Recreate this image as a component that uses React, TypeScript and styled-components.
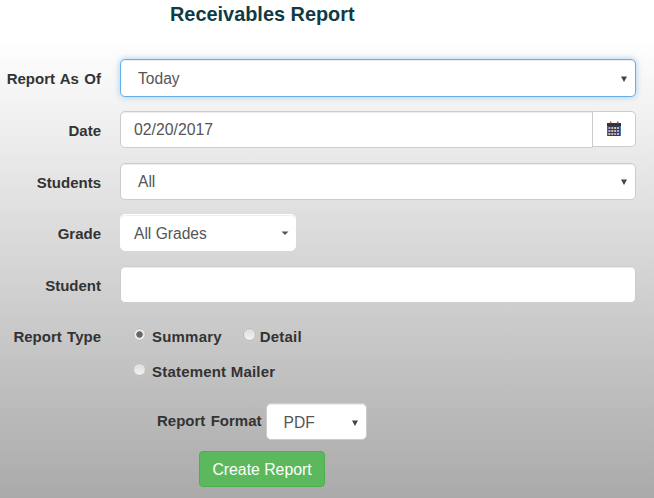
import React from "react";
import styled, { createGlobalStyle } from "styled-components";

const Global = createGlobalStyle`
  html, body { margin: 0; padding: 0; }
  body { font-family: "Liberation Sans", Arial, sans-serif; font-size: 15px; color: #333; }
`;

const Page = styled.div`
  width: 654px;
  height: 498px;
  overflow: hidden;
  background: linear-gradient(to bottom, #ffffff 0, #ffffff 38px, #aaaaaa 498px);
  display: flex;
  flex-direction: column;
`;

const Title = styled.h1`
  margin: 0;
  padding: 3px 0 0 170px;
  height: 59px;
  box-sizing: border-box;
  font-size: 19.9px;
  line-height: 23px;
  font-weight: 700;
  color: #0f3b45;
`;

const Form = styled.div`
  display: flex;
  flex-direction: column;
  gap: 14.4px;
  padding-right: 18px;
`;

const Label = styled.label<{ $shift?: number }>`
  font-size: 15px;
  word-spacing: 1.2px;
  font-weight: 700;
  text-align: right;
  color: #333;
  white-space: nowrap;
  padding-top: ${(p) => (p.$shift !== undefined ? p.$shift : 2)}px;
`;

const Row = styled.div<{ $top?: number }>`
  display: grid;
  grid-template-columns: 101px 1fr;
  column-gap: 19px;
  align-items: ${(p) => (p.$top ? "start" : "center")};
  margin-top: ${(p) => p.$top ?? 0}px;
`;

const Control = styled.div<{ $focus?: boolean; $w?: number; $plain?: boolean; $pl?: number; $h?: number; $pr?: number }>`
  box-sizing: border-box;
  height: ${(p) => p.$h ?? 37.2}px;
  width: ${(p) => (p.$w ? `${p.$w}px` : "100%")};
  padding: 2px ${(p) => p.$pr ?? 7}px 0 ${(p) => p.$pl ?? 13}px;
  display: flex;
  align-items: center;
  justify-content: space-between;
  background: #fff;
  border-radius: 5px;
  border: 1px solid ${(p) => (p.$focus ? "#66afe9" : p.$plain ? "#fff" : "#ccc")};
  box-shadow: ${(p) => (p.$focus ? "inset 0 1px 1px rgba(0,0,0,.075), 0 0 6px rgba(102,175,233,.6)" : "inset 0 1px 1px rgba(0,0,0,.075)")};
  color: #555;
  font-size: 15.6px;
`;

const InputGroup = styled.div`
  display: flex;
  height: 37.2px;
  align-items: flex-start;
`;

const DateInput = styled.div`
  flex: 1;
  height: 100%;
  box-sizing: border-box;
  display: flex;
  align-items: center;
  padding-left: 13px;
  background: #fff;
  border: 1px solid #ccc;
  border-radius: 5px 0 0 5px;
  color: #555;
  font-size: 15.8px;
  box-shadow: inset 0 1px 1px rgba(0,0,0,.075);
`;

const Addon = styled.div`
  width: 43px;
  height: 36px;
  box-sizing: border-box;
  display: flex;
  align-items: center;
  justify-content: center;
  background: #fff;
  border: 1px solid #ccc;
  border-left: 0;
  border-radius: 0 5px 5px 0;
`;

const Radios = styled.div`
  display: flex;
  flex-direction: column;
  gap: 18px;
  padding-left: 13px;
`;

const RadioLine = styled.div`
  display: flex;
  align-items: center;
  height: 17px;
`;

const Radio = styled.span<{ $on?: boolean; $mr?: number }>`
  width: 13px;
  height: 13px;
  box-sizing: border-box;
  border-radius: 50%;
  border: 1px solid #b8b8b8;
  background: ${(p) =>
    p.$on
      ? "radial-gradient(circle, #666 0 2.8px, #e6e6e6 3.6px)"
      : "linear-gradient(#dedede, #f2f2f2)"};
  box-shadow: 0 0 1px rgba(255,255,255,.7);
  margin-top: -4px;
  margin-right: ${(p) => p.$mr ?? 6}px;
`;

const RadioText = styled.span<{ $gap?: number }>`
  font-weight: 700;
  font-size: 15px;
  letter-spacing: 0.2px;
  color: #333;
  margin-right: ${(p) => p.$gap ?? 0}px;
`;

const FormatRow = styled.div`
  display: flex;
  align-items: center;
  gap: 4px;
  padding: 0 0 0 157px;
  margin-top: 23px;
  & > label {
    padding-bottom: 2px;
  }
`;

const ButtonRow = styled.div`
  padding: 11px 0 0 199px;
`;

const Button = styled.button`
  width: 126px;
  height: 36px;
  padding: 1px 0 0;
  font: 15.8px "Liberation Sans", Arial, sans-serif;
  color: #fff;
  background: #5cb85c;
  border: 1px solid #4cae4c;
  border-radius: 4px;
`;

const Chevron = () => (
  <svg width="8" height="8" viewBox="0 0 8 8">
    <path d="M1 1.5 H7 L4 7 Z" fill="#444" />
  </svg>
);

const SmallCaret = () => (
  <svg width="8" height="5" viewBox="0 0 8 5">
    <path d="M0.5 0.5 H7.5 L4 4 Z" fill="#555" />
  </svg>
);

const CalendarIcon = () => (
  <svg width="14" height="15" viewBox="0 0 14 15">
    <rect x="0" y="2" width="14" height="3" fill="#333" />
    <rect x="3" y="0.5" width="1.4" height="2" fill="#a8503c" />
    <rect x="10" y="0.5" width="1.4" height="2" fill="#a03c78" />
    <rect x="0" y="5" width="14" height="10" fill="#3a3a50" />
    <rect x="0" y="5" width="1" height="10" fill="#9a4a3a" />
    <rect x="13" y="5" width="1" height="10" fill="#3a7ab8" />
    {[0, 1, 2].map((r) =>
      [0, 1, 2, 3].map((c) => (
        <rect
          key={`${r}-${c}`}
          x={1.4 + c * 2.9}
          y={6 + r * 3}
          width="2"
          height="2"
          fill={["#d89ab8", "#9ac4e8", "#e0c488", "#b8b8e0"][(r + c) % 4]}
        />
      ))
    )}
  </svg>
);

export default function App() {
  return (
    <Page>
      <Global />
      <Title>Receivables Report</Title>
      <Form>
        <Row>
          <Label>Report As Of</Label>
          <Control $focus $pl={17} $h={37.6}>Today<Chevron /></Control>
        </Row>
        <Row>
          <Label>Date</Label>
          <InputGroup>
            <DateInput>02/20/2017</DateInput>
            <Addon><CalendarIcon /></Addon>
          </InputGroup>
        </Row>
        <Row>
          <Label>Students</Label>
          <Control $pl={17}>All<Chevron /></Control>
        </Row>
        <Row>
          <Label>Grade</Label>
          <Control $plain $w={176} $pr={6}>All Grades<SmallCaret /></Control>
        </Row>
        <Row>
          <Label>Student</Label>
          <Control />
        </Row>
        <Row $top={11}>
          <Label $shift={0}>Report Type</Label>
          <Radios>
            <RadioLine>
              <Radio $on /><RadioText $gap={21}>Summary</RadioText>
              <Radio $mr={4} /><RadioText>Detail</RadioText>
            </RadioLine>
            <RadioLine>
              <Radio /><RadioText>Statement Mailer</RadioText>
            </RadioLine>
          </Radios>
        </Row>
      </Form>
      <FormatRow>
        <Label $shift={0}>Report Format</Label>
        <Control $w={101} $pl={17}>PDF<Chevron /></Control>
      </FormatRow>
      <ButtonRow><Button>Create Report</Button></ButtonRow>
    </Page>
  );
}
